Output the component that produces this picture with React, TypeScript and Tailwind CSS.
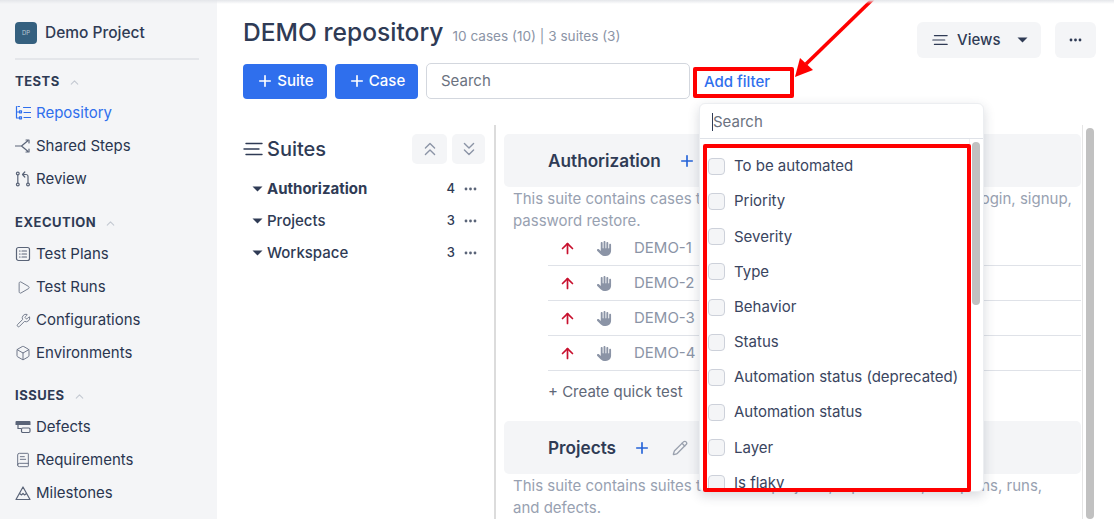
import React from "react";
import { Play, Wrench, Box, BookText, ChevronUp, ChevronsUp, ChevronsDown, ArrowUp, Plus, Pencil } from "lucide-react";
import { FaHand } from "react-icons/fa6";

const Stroke = ({ children, size = 16 }: { children: React.ReactNode; size?: number }) => (
  <svg width={size} height={size} viewBox="0 0 16 16" fill="none" stroke="currentColor" strokeWidth="1.2" strokeLinecap="round" strokeLinejoin="round" className="shrink-0">
    {children}
  </svg>
);

const RepoIcon = () => (
  <Stroke>
    <path d="M1.5 1.5v11.5h3M1.5 7h3M3 1.5h1.5" />
    <rect x="4.5" y="5.8" width="2" height="2" />
    <rect x="4.5" y="11.8" width="2" height="2" />
    <path d="M8.5 2.5h7M9 7.5h6.5M9 12.5h6.5" />
  </Stroke>
);
const SharedIcon = () => (
  <Stroke>
    <path d="M0.5 8h6l6-5M6.5 8l6 5M11 2h3v3M11 14h3v-3" />
  </Stroke>
);
const ReviewIcon = () => (
  <Stroke>
    <circle cx="2.8" cy="2.5" r="1.4" />
    <circle cx="2.8" cy="13.5" r="1.4" />
    <circle cx="13" cy="13.5" r="1.4" />
    <path d="M2.8 4v8M13 12V5.5a2 2 0 0 0-2-2H8M9.8 1L7.5 3.5 9.8 6" />
  </Stroke>
);
const PlansIcon = () => (
  <Stroke>
    <rect x="1.5" y="1.5" width="13" height="13" rx="2" />
    <path d="M4.5 5h.6M4.5 8h.6M4.5 11h.6M7 5h4.5M7 8h4.5M7 11h4.5" />
  </Stroke>
);
const DefectIcon = () => (
  <svg width="16" height="16" viewBox="0 0 16 16" className="shrink-0">
    <path d="M0.5 3a1 1 0 0 1 1-1h13a1 1 0 0 1 1 1v3h-15z" fill="currentColor" />
    <path d="M3 6v3.5h3" fill="none" stroke="currentColor" strokeWidth="1.2" />
    <rect x="6.5" y="9" width="8.5" height="4.5" rx="1.2" fill="none" stroke="currentColor" strokeWidth="1.2" />
  </svg>
);
const MilestoneIcon = () => (
  <Stroke>
    <path d="M8 2L15 14.5H1zM4.6 8.5l2 1.4L8 8.5l1.5 1.4 2-1.4" />
  </Stroke>
);
const LinesIcon = ({ w = 20 }: { w?: number }) => (
  <svg width={w} height="16" viewBox="0 0 20 16" fill="none" stroke="currentColor" strokeWidth="1.4" strokeLinecap="round" className="shrink-0">
    <path d="M3 2.5h16M1 8h15M3 13.5h16" />
  </svg>
);
const Dots = ({ className = "" }: { className?: string }) => (
  <svg width="13" height="4" viewBox="0 0 13 4" fill="currentColor" className={className}>
    <circle cx="2" cy="2" r="1.4" />
    <circle cx="6.5" cy="2" r="1.4" />
    <circle cx="11" cy="2" r="1.4" />
  </svg>
);
const Caret = () => (
  <svg width="11" height="6" viewBox="0 0 11 6" fill="currentColor" className="shrink-0">
    <path d="M0.5 0.5h10L5.5 5.5z" />
  </svg>
);

const NavItem = ({ icon, label, active }: { icon: React.ReactNode; label: string; active?: boolean }) => (
  <div className={`flex h-[32.9px] items-center gap-[5px] text-[15px] ${active ? "text-[#2f6fed]" : "text-[#2a3650]"}`}>
    <span className={`flex w-[16px] justify-center ${active ? "text-[#2f6fed]" : "text-[#5a6478]"}`}>{icon}</span>
    {label}
  </div>
);

const SectionTitle = ({ label }: { label: string }) => (
  <div className="flex items-center gap-[8px] text-[13px] font-bold tracking-[0.5px] text-[#2f3b55]">
    {label}
    <ChevronUp size={13} className="text-[#c4c9d2]" />
  </div>
);

const Row = ({ id, last }: { id: string; last?: boolean }) => (
  <div className={`flex h-[35px] items-center pl-[11px] pt-[1px] text-[15px] text-[#8b94a6] ${last ? "" : "border-b border-[#dfe2e8]"}`}>
    <ArrowUp size={17} strokeWidth={2.4} className="text-[#c8102e]" />
    <FaHand size={15} className="ml-[21px] text-[#8b94a6]" />
    <span className="ml-[22px]">{id}</span>
  </div>
);

const filters = ["To be automated", "Priority", "Severity", "Type", "Behavior", "Status", "Automation status (deprecated)", "Automation status", "Layer", "Is flaky"];

const SuiteHeader = ({ name, pencil }: { name: string; pencil?: boolean }) => (
  <div className="flex h-[53px] items-center rounded-[5px] bg-[#f4f5f7] pl-[44px] pt-[1px] text-[#2f3b55]">
    <span className="text-[17.2px] font-semibold">{name}</span>
    <Plus size={18} strokeWidth={2.2} className="ml-[17px] text-[#2563d8]" />
    {pencil && <Pencil size={16} className="ml-[21px] text-[#9aa1ae]" />}
  </div>
);

const Desc = ({ children }: { children: React.ReactNode }) => (
  <p className="whitespace-nowrap px-[9px] pt-[1px] text-[15px] leading-[22px] text-[#98a1b1]">{children}</p>
);

export default function App() {
  return (
    <div className="relative flex h-[519px] w-[1114px] overflow-hidden bg-white font-['Inter',sans-serif]">
      <aside className="flex h-full w-[217px] shrink-0 flex-col bg-[#f4f5f7] pl-[15px] pr-[18px] pt-[21px]">
        <div className="flex items-center gap-[8px] border-b-2 border-[#e4e6ea] pb-[14px]">
          <span className="flex h-[22px] w-[22px] items-center justify-center rounded-[4px] bg-[#35607f] text-[6px] text-[#b9c8d4]">DP</span>
          <span className="text-[15.5px] font-medium text-[#2f3b55]">Demo Project</span>
        </div>
        <div className="mt-[12px]"><SectionTitle label="TESTS" /></div>
        <div className="mt-[5px] flex flex-col">
          <NavItem active icon={<RepoIcon />} label="Repository" />
          <NavItem icon={<SharedIcon />} label="Shared Steps" />
          <NavItem icon={<ReviewIcon />} label="Review" />
        </div>
        <div className="mt-[18px]"><SectionTitle label="EXECUTION" /></div>
        <div className="mt-[5px] flex flex-col">
          <NavItem icon={<PlansIcon />} label="Test Plans" />
          <NavItem icon={<Play size={15} strokeWidth={1.3} />} label="Test Runs" />
          <NavItem icon={<Wrench size={15} strokeWidth={1.3} />} label="Configurations" />
          <NavItem icon={<Box size={16} strokeWidth={1.3} />} label="Environments" />
        </div>
        <div className="mt-[17px]"><SectionTitle label="ISSUES" /></div>
        <div className="mt-[5px] flex flex-col">
          <NavItem icon={<DefectIcon />} label="Defects" />
          <NavItem icon={<BookText size={16} strokeWidth={1.3} />} label="Requirements" />
          <NavItem icon={<MilestoneIcon />} label="Milestones" />
        </div>
      </aside>

      <main className="flex min-w-0 flex-1 flex-col pl-[26px] pr-[18px]">
        <div className="flex h-[63px] items-start justify-between pt-[15px]">
          <div className="flex items-baseline gap-[9px]">
            <h1 className="text-[24.6px] font-medium leading-[34px] text-[#2f3b55]">DEMO repository</h1>
            <span className="text-[13.6px] text-[#8b94a6]">10 cases (10) | 3 suites (3)</span>
          </div>
          <div className="flex gap-[14px] pt-[7px]">
            <div className="flex h-[36px] w-[124px] items-center rounded-[6px] bg-[#f4f5f7] pl-[15px] text-[#2f3b55]">
              <LinesIcon w={16} />
              <span className="ml-[9px] text-[15px] font-medium">Views</span>
              <span className="ml-[16px]"><Caret /></span>
            </div>
            <div className="flex h-[36px] w-[41px] items-center justify-center rounded-[6px] bg-[#f4f5f7] text-[#2f3b55]">
              <Dots />
            </div>
          </div>
        </div>

        <div className="flex h-[36px] items-center gap-[8px]">
          <button className="flex h-[35px] w-[84px] items-center justify-center gap-[3px] rounded-[4px] bg-[#2f6fed] text-[15px] font-medium text-white"><Plus size={18} strokeWidth={2.2} />Suite</button>
          <button className="flex h-[35px] w-[83px] items-center justify-center gap-[3px] rounded-[4px] bg-[#2f6fed] text-[15px] font-medium text-white"><Plus size={18} strokeWidth={2.2} />Case</button>
          <div className="flex h-[36px] w-[264px] items-center rounded-[5px] border border-[#d3d7de] bg-white pl-[14px] pt-[1px] text-[15px] text-[#6b7280]">Search</div>
          <span className="ml-[6px] pt-[2px] text-[15px] font-medium text-[#2f6fed]">Add filter</span>
        </div>

        <div className="flex min-h-0 flex-1 pt-[26px]">
          <section className="w-[251px] shrink-0 pt-[9px]">
            <div className="flex h-[30px] items-center justify-between pr-[9px] text-[#2f3b55]">
              <div className="flex items-center gap-[4px]">
                <LinesIcon />
                <span className="text-[20px] font-medium">Suites</span>
              </div>
              <div className="flex gap-[5px]">
                <span className="flex h-[30px] w-[35px] items-center justify-center rounded-[5px] bg-[#f4f5f7] text-[#8b94a6]"><ChevronsUp size={22} strokeWidth={1.5} /></span>
                <span className="flex h-[30px] w-[33px] items-center justify-center rounded-[5px] bg-[#f4f5f7] text-[#8b94a6]"><ChevronsDown size={22} strokeWidth={1.5} /></span>
              </div>
            </div>
            <div className="mt-[9px] flex flex-col pl-[9px] pr-[17px] text-[#2f3b55]">
              {[["Authorization", "4", true], ["Projects", "3", false], ["Workspace", "3", false]].map(([name, count, bold]) => (
                <div key={name as string} className="flex h-[32px] items-center text-[15px]">
                  <Caret />
                  <span className={`ml-[4px] flex-1 ${bold ? "font-bold" : "font-medium"}`}>{name}</span>
                  <span className="text-[13px] font-medium">{count}</span>
                  <Dots className="ml-[9px] text-[#5a6478]" />
                </div>
              ))}
            </div>
          </section>

          <section className="flex min-w-0 flex-1 border-l-2 border-[#dcdcdc] pl-[8px]">
            <div className="min-w-0 flex-1 pt-[9px]">
              <SuiteHeader name="Authorization" />
              <Desc>This suite contains cases that cover the user authentication flow: login, signup,<br />password restore.</Desc>
              <div className="-mt-px ml-[44px]">
                <Row id="DEMO-1" />
                <Row id="DEMO-2" />
                <Row id="DEMO-3" />
                <Row id="DEMO-4" />
              </div>
              <div className="ml-[44px] mt-[10px] text-[15px] text-[#5f6878]">+ Create quick test</div>
              <div className="mt-[17px]"><SuiteHeader name="Projects" pencil /></div>
              <Desc>This suite contains suites that cover projects, repositories, test plans, runs,<br />and defects.</Desc>
            </div>
            <div className="ml-[1px] w-[14px] shrink-0 border-l border-[#e5e5e5] px-[3px] pt-[3px]">
              <div className="h-full w-[8px] rounded-[4px] bg-[#c1c1c1]" />
            </div>
          </section>
        </div>
      </main>

      <div className="absolute left-[699px] top-[103px] h-[389px] w-[285px] overflow-hidden rounded-[6px] border border-[#eceef1] bg-white shadow-[0_4px_12px_rgba(40,50,70,0.18)]">
        <div className="flex h-[35px] items-center border-b border-[#dfe2e8] pl-[12px] pt-[2px] text-[15px] text-[#6b7280]">
          <span className="h-[18px] w-px bg-[#2f3b55]" />Search
        </div>
        <div className="flex">
          <div className="flex-1 pl-[8px] pt-[9.8px]">
            {filters.map((f) => (
              <div key={f} className="flex h-[35.2px] items-center gap-[9px] text-[15px] text-[#3a4560]">
                <span className="h-[17px] w-[17px] shrink-0 rounded-[4px] border border-[#cdd1da] bg-[#f4f5f7]" />
                {f}
              </div>
            ))}
          </div>
          <div className="w-[14px] shrink-0 border-l border-[#eef0f2] pl-[2px] pt-[3px]">
            <div className="h-[163px] w-[8px] rounded-[4px] bg-[#c1c1c1]" />
          </div>
        </div>
      </div>

      <div className="pointer-events-none absolute left-[693px] top-[67px] h-[31px] w-[101px] rounded-[2px] border-[4px] border-[#ff0000]" />
      <div className="pointer-events-none absolute left-[703px] top-[144px] h-[348px] w-[268px] rounded-[2px] border-[4px] border-[#ff0000]" />
      <svg className="pointer-events-none absolute left-[790px] top-0" width="90" height="82" viewBox="0 0 90 82">
        <path d="M83 -1L16 64" stroke="#ff0000" strokeWidth="3.6" fill="none" />
        <path d="M5 77L10 58L23 70z" fill="#ff0000" />
      </svg>
      <div className="pointer-events-none absolute inset-x-0 top-0 h-[4px] bg-gradient-to-b from-[#e4e6ea] to-transparent" />
    </div>
  );
}
